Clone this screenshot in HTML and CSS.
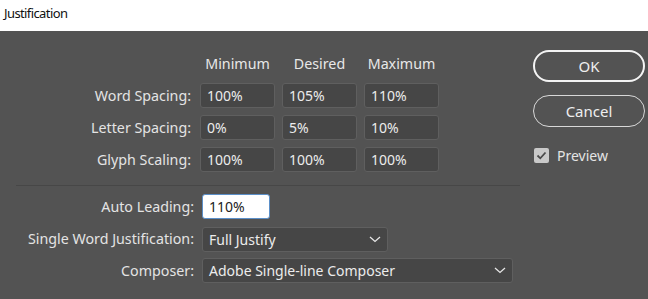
FILE: index.html
```html
<!DOCTYPE html>
<html lang="en">
<head>
    <meta charset="UTF-8">
    <title>Justification</title>
    <link rel="stylesheet" href="styles.css">
</head>
<body>
    <div class="titlebar">Justification</div>

    <div class="dialog">
        <div class="options">
            <div class="spacing-grid">
                <div></div>
                <div class="col-head">Minimum</div>
                <div class="col-head">Desired</div>
                <div class="col-head">Maximum</div>

                <label class="row-label">Word Spacing:</label>
                <div class="field">100%</div>
                <div class="field">105%</div>
                <div class="field">110%</div>

                <label class="row-label">Letter Spacing:</label>
                <div class="field">0%</div>
                <div class="field">5%</div>
                <div class="field">10%</div>

                <label class="row-label">Glyph Scaling:</label>
                <div class="field">100%</div>
                <div class="field">100%</div>
                <div class="field">100%</div>
            </div>

            <div class="separator"></div>

            <div class="extra-grid">
                <label class="row-label">Auto Leading:</label>
                <div><div class="field field-active">110%</div></div>

                <label class="row-label">Single Word Justification:</label>
                <div><div class="select select-short">Full Justify
                    <svg class="chevron" width="12" height="7" viewBox="0 0 12 7"><path d="M1 1 L6 5.5 L11 1" fill="none" stroke="#e6e6e6" stroke-width="1.3"/></svg>
                </div></div>

                <label class="row-label">Composer:</label>
                <div><div class="select select-long">Adobe Single-line Composer
                    <svg class="chevron" width="12" height="7" viewBox="0 0 12 7"><path d="M1 1 L6 5.5 L11 1" fill="none" stroke="#e6e6e6" stroke-width="1.3"/></svg>
                </div></div>
            </div>
        </div>

        <div class="actions">
            <button class="btn btn-default">OK</button>
            <button class="btn">Cancel</button>
            <div class="preview">
                <span class="checkbox">
                    <svg width="15" height="15" viewBox="0 0 15 15"><path d="M3.5 7.5 L6.3 10.3 L11.5 4.5" fill="none" stroke="#4a4a4a" stroke-width="1.8"/></svg>
                </span>
                Preview
            </div>
        </div>
    </div>
</body>
</html>
```

FILE: styles.css
```css
* {
    margin: 0;
    padding: 0;
    box-sizing: border-box;
    font-family: 'Noto Sans', 'Open Sans', sans-serif;
}

body {
    background-color: #535353;
    width: 648px;
    height: 299px;
    overflow: hidden;
}

.titlebar {
    background-color: #ffffff;
    color: #111111;
    height: 31px;
    padding: 4px 0 0 4px;
    font-size: 13px;
    letter-spacing: -0.6px;
}

.dialog {
    display: flex;
    color: #e4e4e4;
    font-size: 14.25px;
}

.options {
    width: 533px;
    padding-top: 21px;
}

.spacing-grid {
    display: grid;
    grid-template-columns: 193px 75px 75px 75px;
    grid-template-rows: 24px 25px 25px 25px;
    column-gap: 7px;
    row-gap: 7px;
}

.col-head {
    text-align: center;
    line-height: 24px;
    color: #e8e8e8;
}

.row-label {
    text-align: right;
    line-height: 25px;
    padding-right: 2px;
    white-space: nowrap;
}

.field {
    height: 25px;
    line-height: 23px;
    padding-left: 6px;
    background-color: #464646;
    border: 1px solid #5f5f5f;
    border-radius: 3px;
    color: #ececec;
    font-size: 14px;
}

.field-active {
    width: 68px;
    background-color: #ffffff;
    border-color: #5b8fc8;
    color: #222222;
}

.separator {
    margin: 13px 0 0 16px;
    width: 504px;
    height: 1px;
    background-color: #474747;
}

.extra-grid {
    display: grid;
    grid-template-columns: 194px 1fr;
    grid-auto-rows: 25px;
    column-gap: 8px;
    row-gap: 7px;
    margin-top: 8px;
}

.extra-grid .row-label {
    padding-right: 0;
}

.select {
    position: relative;
    height: 25px;
    line-height: 23px;
    padding-left: 6px;
    background-color: #464646;
    border: 1px solid #5f5f5f;
    border-radius: 3px;
    color: #ececec;
    font-size: 14px;
}

.select-short {
    width: 186px;
    margin-top: 1px;
}

.select-long {
    width: 311px;
}

.chevron {
    position: absolute;
    right: 6px;
    top: 8px;
}

.actions {
    display: flex;
    flex-direction: column;
    padding-top: 19px;
    width: 112px;
}

.btn {
    height: 32px;
    border-radius: 16px;
    background-color: transparent;
    border: 1px solid #d8d8d8;
    color: #eeeeee;
    font-size: 15px;
    margin-bottom: 13px;
}

.btn-default {
    border: 2px solid #f4f4f4;
}

.preview {
    display: flex;
    align-items: center;
    margin-top: 6px;
    padding-left: 1px;
    color: #e4e4e4;
    font-size: 14px;
}

.checkbox {
    display: flex;
    width: 15px;
    height: 15px;
    margin-right: 8px;
    background-color: #c9c9c9;
    border-radius: 2px;
}
```
